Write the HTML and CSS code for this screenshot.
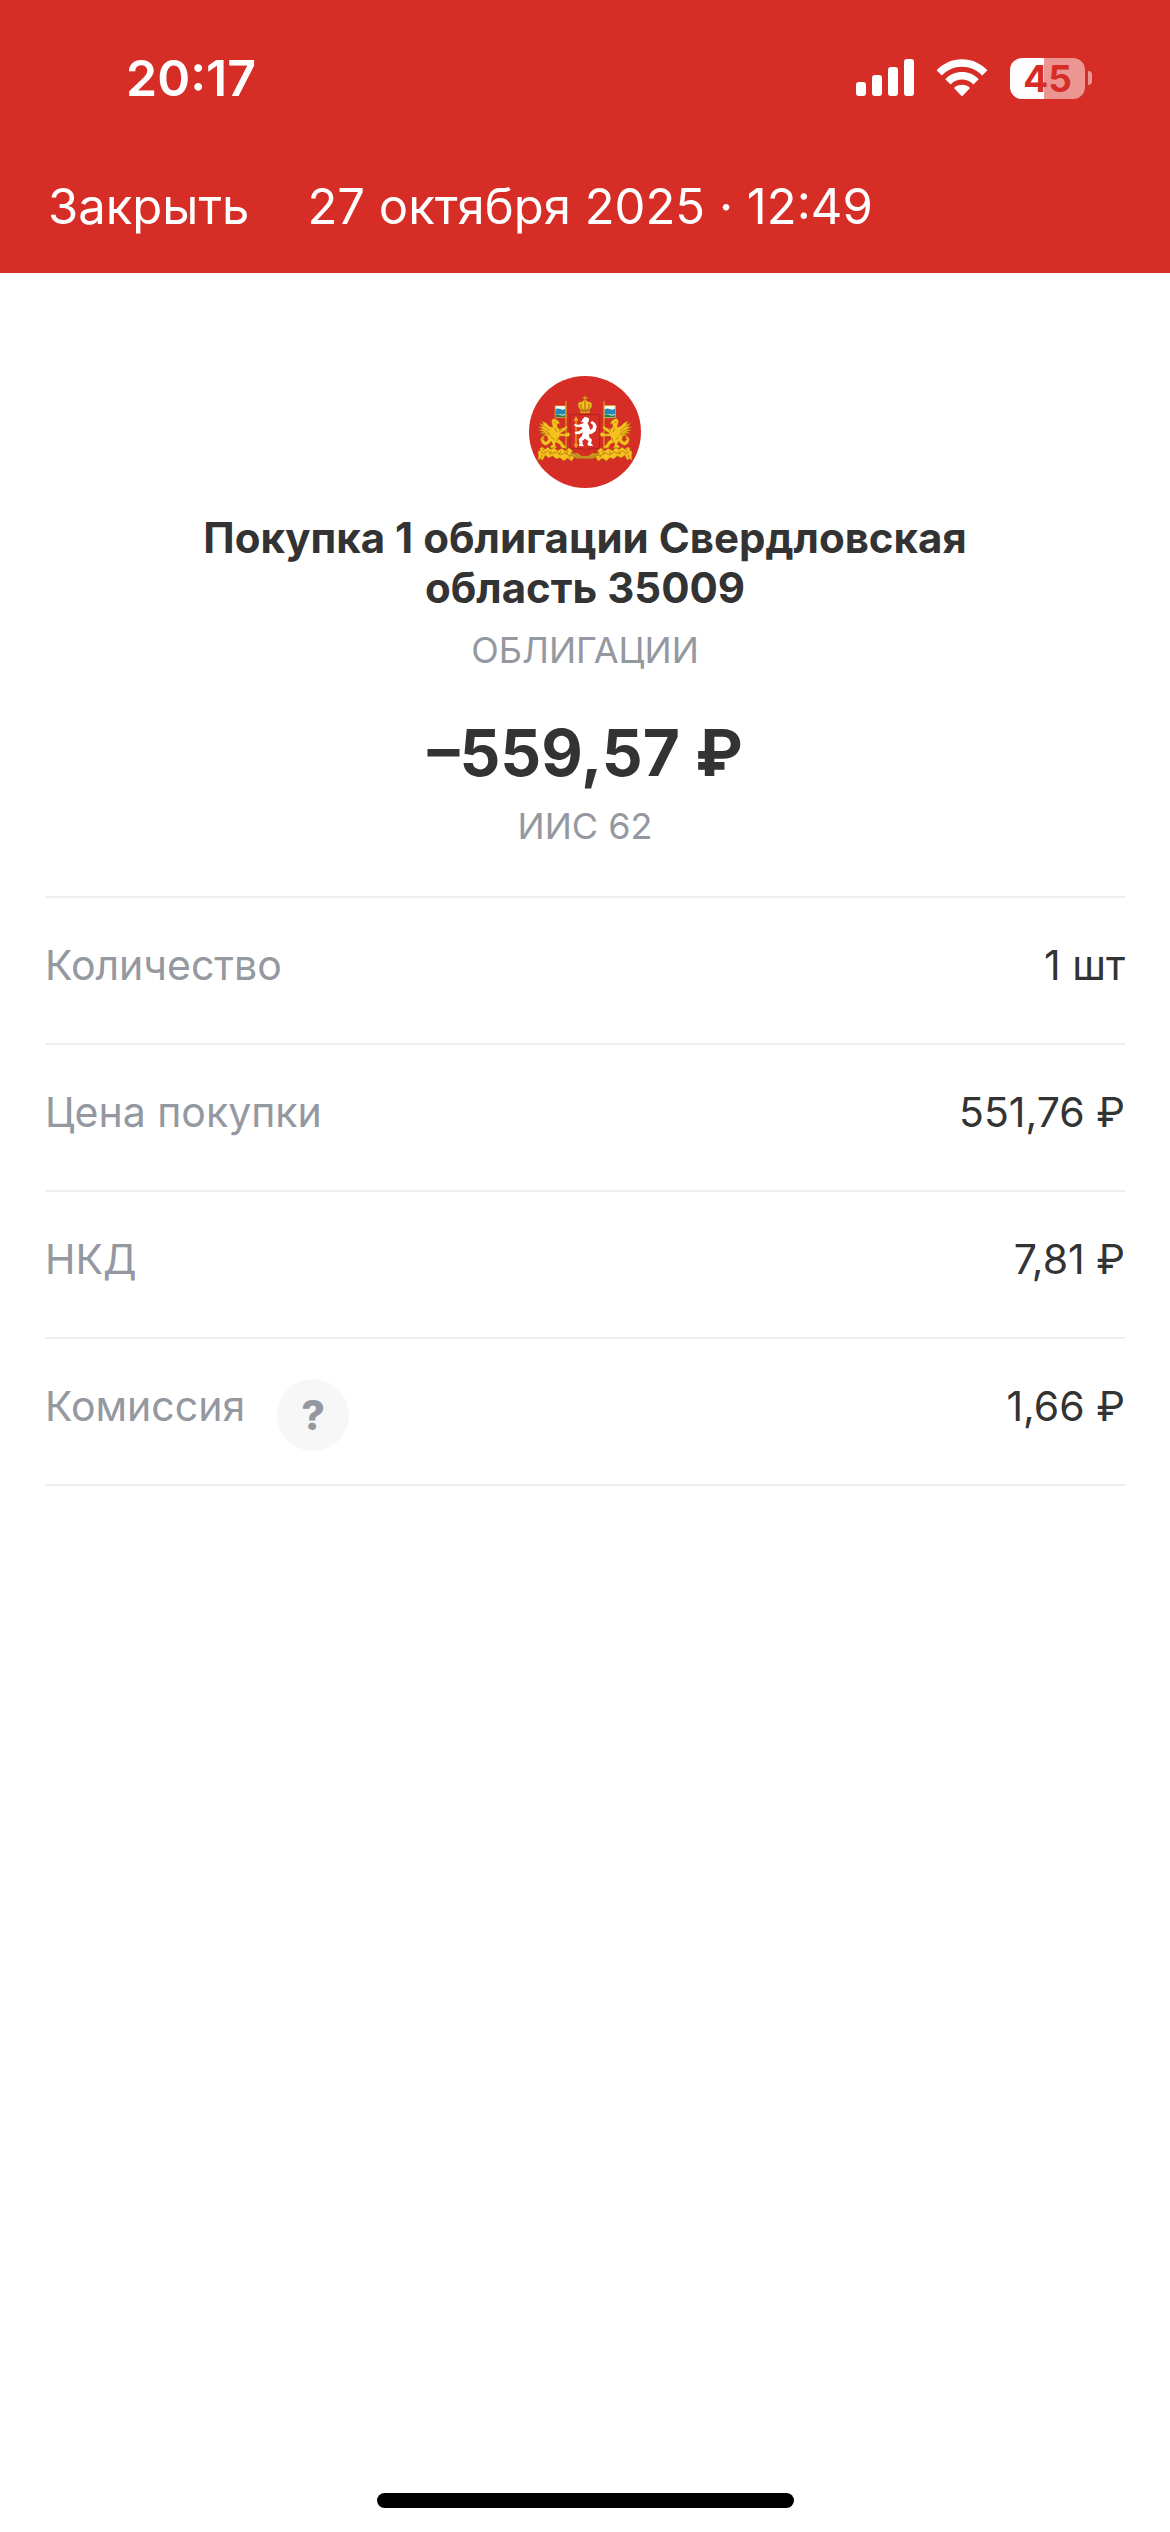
FILE: index.html
```html
<!DOCTYPE html>
<html lang="ru">
<head>
<meta charset="utf-8">
<meta name="viewport" content="width=device-width, initial-scale=1">
<title>Покупка облигации</title>
<link rel="stylesheet" href="styles.css">
</head>
<body>
<div class="page">
  <header class="header">
    <div class="status">
      <time class="status-time">20:17</time>
      <div class="status-icons">
        <svg class="signal" viewBox="0 0 58 38" aria-hidden="true">
          <rect x="0" y="23" width="10" height="14" rx="3"/>
          <rect x="16" y="16" width="10" height="21" rx="3"/>
          <rect x="32" y="8" width="10" height="29" rx="3"/>
          <rect x="48" y="0" width="10" height="37" rx="3"/>
        </svg>
        <svg class="wifi" viewBox="0 0 52 38" aria-hidden="true">
          <path d="M.6 11.2C7.500 4.200 16.500.300 26 .300S44.500 4.200 51.400 11.200L46.200 16.400C40.800 10.900 33.700 7.800 26 7.800S11.200 10.900 5.800 16.400Z"/>
          <path d="M9.300 20.200C13.800 15.600 19.700 13.100 26 13.100S38.200 15.600 42.700 20.200L37.400 25.500C34.300 22.300 30.300 20.600 26 20.600S17.700 22.300 14.600 25.500Z"/>
          <path d="M18 29C20.200 26.900 23 25.800 26 25.800S31.800 26.900 34 29L27 36.500Q26 37.500 25 36.500Z"/>
        </svg>
        <div class="battery"><span class="battery-body">45</span><span class="battery-cap"></span></div>
      </div>
    </div>
    <nav class="nav">
      <button class="close" type="button">Закрыть</button>
      <span class="date">27 октября 2025 · 12:49</span>
    </nav>
  </header>

  <main class="content">
    <section class="summary">
      <svg class="emblem" viewBox="27 33 336 336" role="img" aria-label="Герб Свердловской области">
        <defs>
          <g id="supporter">
            <!-- flag and its pole -->
            <path d="M138 108V252" stroke="#d99a1c" stroke-width="4" fill="none"/>
            <path d="M106 123H136V157H106Z" fill="#fff"/>
            <path d="M106 133Q114 128 121 132T136 131V147Q128 151 121 148T106 149Z" fill="#2389b4"/>
            <path d="M106 149Q114 146 121 150T136 149V156H106Z" fill="#22804d"/>
            <path d="M105 122H137V158H105Z" stroke="#d99a1c" stroke-width="2" fill="none"/>
            <!-- griffin -->
            <path d="M94 168L100 160L108 163L116 168L120 178L113 176L111 184L118 193L133 187L139 182L143 187L136 196L121 205L132 207L145 201L151 208L145 216L132 214L119 213L116 222L126 230L132 240L140 244L139 250L125 249L119 238L107 232L106 241L111 249H92L90 243L98 239L94 229L87 236L77 242L66 236L61 224L67 213L74 216L71 224L77 231L84 224L81 213L66 211L76 207L59 204L71 200L55 195L68 193L55 185L68 185L57 175L71 178L64 168L78 173L88 184L98 187Z" fill="#f6c21f" stroke="#a8650e" stroke-width="1.500"/>
            <path d="M66 179L90 198M63 189L90 206M70 202L91 211M101 171L107 173M105 189L111 201M93 215L103 224M114 218L111 229M126 193L117 199M71 218L67 226" stroke="#a8650e" stroke-width="2" fill="none"/>
            <!-- oak branch -->
            <path d="M55 270Q50 259 61 255Q56 247 68 246L75 253L84 246L91 253L103 248L112 257L126 250L136 258L147 248L158 257L154 266L171 264L184 272L174 281L163 277L155 289L143 280L131 288L120 278L109 282L98 273L86 279L76 271L68 286L61 281L54 286Z" fill="#f6c21f" stroke="#a8650e" stroke-width="1.500"/>
            <path d="M62 259L72 266L83 257L95 266L108 261L121 270L135 263L147 271L163 270M68 251L73 259M94 258L89 269M122 258L118 268M143 256L139 269M151 279L147 271M64 278L66 269" stroke="#a8650e" stroke-width="2" fill="none"/>
          </g>
        </defs>
        <circle cx="195" cy="201" r="168" fill="#d62e26"/>
        <path d="M150 149H239V244Q239 251 230 251H205L195 256L185 251H159Q150 251 150 244Z" fill="#d62e26" stroke="#9d2019" stroke-width="2"/>
        <use href="#supporter"/>
        <use href="#supporter" transform="matrix(-1 0 0 1 390 0)"/>
        <!-- the flag on the right flies away from its pole, to the right -->
        <path d="M253 122H286V158H253Z" fill="#fff" stroke="#d99a1c" stroke-width="2"/>
        <path d="M254 133Q262 128 269 132T285 131V147Q277 151 269 148T254 149Z" fill="#2389b4"/>
        <path d="M254 149Q262 146 269 150T285 149V157H254Z" fill="#22804d"/>
        <!-- crown -->
        <path d="M193 92H197V97H202V101H197V106Q202 107 205 111Q214 109 216 117Q217 126 210 133L209 144H181L180 133Q173 126 174 117Q176 109 185 111Q188 107 193 106V101H188V97H193Z" fill="#f4bd20" stroke="#a8650e" stroke-width="1.500"/>
        <path d="M180 135H210M183 117Q180 126 186 132M207 117Q210 126 204 132M195 109V132" stroke="#a8650e" stroke-width="3" fill="none"/>
        <path d="M184 138H206" stroke="#b8322a" stroke-width="3"/>
        <!-- arrow and sable -->
        <path d="M168 160V239M163 167L168 158L173 167M163 237L168 246L173 237" stroke="#eead1d" stroke-width="4" fill="none"/>
        <path d="M187 164L194 155L200 157L207 160L206 170L202 174L207 183L211 195L218 190L219 181L211 173L216 168L225 174L230 184L227 198L216 206L207 208L208 217L216 224L213 235L220 242L207 243L202 238L206 228L195 221L187 227L188 238L192 244L176 243L179 236L176 223L186 213L188 202L178 208L166 207L164 202L177 198L187 191L184 185L175 187L163 182V177L175 179L187 176L192 171L183 172Z" fill="#fff"/>
        <!-- motto ribbon -->
        <path d="M153 263Q170 265 180 273H211Q222 264 238 263L232 272Q220 276 212 281H180Q168 274 156 273Z" fill="#d9a426" stroke="#98600d" stroke-width="1.500"/>
        <path d="M162 268L180 277H211L229 268" fill="none" stroke="#7a6b35" stroke-width="2" stroke-dasharray="4 2"/>
      </svg>
      <h1 class="title">Покупка 1 облигации Свердловская область 35009</h1>
      <p class="caption">ОБЛИГАЦИИ</p>
      <p class="amount">–559,57 ₽</p>
      <p class="caption">ИИС 62</p>
    </section>

    <dl class="details">
      <div class="row"><dt>Количество</dt><dd>1 шт</dd></div>
      <div class="row"><dt>Цена покупки</dt><dd>551,76 ₽</dd></div>
      <div class="row"><dt>НКД</dt><dd>7,81 ₽</dd></div>
      <div class="row"><dt>Комиссия <button class="help" type="button" aria-label="О комиссии">?</button></dt><dd>1,66 ₽</dd></div>
    </dl>
  </main>
  <div class="home-indicator"></div>
</div>
</body>
</html>
```
FILE: styles.css
```css
* {
  box-sizing: border-box;
}

body {
  margin: 0;
  background: #fff;
  color: #333;
  font-family: Inter, "Liberation Sans", sans-serif;
}

h1, p, dl, dd {
  margin: 0;
}

button {
  padding: 0;
  border: 0;
  font-family: inherit;
}

.page {
  display: flex;
  flex-direction: column;
  min-height: 100vh;
  padding-bottom: 24px;
}

.header {
  background: #d62e26;
  color: #fff;
  padding: 48px 48px 36px;
}

.status {
  display: flex;
  align-items: center;
  justify-content: space-between;
  height: 60px;
  padding: 0 30px 0 78px;
}

.status-time {
  font-size: 50px;
  font-weight: 600;
  line-height: 60px;
}

.status-icons {
  display: flex;
  align-items: center;
  gap: 22px;
}

.signal {
  width: 58px;
  height: 38px;
  fill: #fff;
}

.wifi {
  width: 52px;
  height: 38px;
  fill: #fff;
}

.battery {
  display: flex;
  align-items: center;
  gap: 3px;
}

.battery-body {
  width: 75px;
  height: 41px;
  border-radius: 12px;
  background: linear-gradient(90deg, #fff 34px, #eb9692 34px);
  color: #d62e26;
  font-size: 37px;
  font-weight: 700;
  line-height: 41px;
  text-align: center;
}

.battery-cap {
  width: 4px;
  height: 14px;
  border-radius: 0 4px 4px 0;
  background: #eb9692;
}

.nav {
  display: flex;
  align-items: center;
  gap: 58px;
  margin-top: 69px;
  font-size: 49px;
  line-height: 60px;
}

.close {
  background: none;
  color: inherit;
  font-size: 49px;
  line-height: 60px;
}

.content {
  padding: 103px 45px 0;
}

.summary {
  display: flex;
  flex-direction: column;
  align-items: center;
  padding-bottom: 47px;
  text-align: center;
}

.emblem {
  width: 112px;
  height: 112px;
}

.title {
  max-width: 820px;
  margin-top: 25px;
  font-size: 42px;
  font-weight: 700;
  line-height: 50px;
}

.caption {
  margin-top: 14px;
  color: #9498a0;
  font-size: 36px;
  line-height: 46px;
}

.amount {
  margin-top: 40px;
  font-size: 64px;
  font-weight: 700;
  line-height: 80px;
}

.amount + .caption {
  margin-top: 10px;
}

.details {
  border-top: 2px solid #eee;
}

.row {
  display: flex;
  align-items: flex-start;
  justify-content: space-between;
  height: 147px;
  padding-top: 40px;
  border-bottom: 2px solid #eee;
  font-size: 41px;
  line-height: 54px;
}

.row dt {
  display: flex;
  gap: 32px;
  color: #9498a0;
}

.help {
  width: 72px;
  height: 72px;
  border-radius: 50%;
  background: #f7f7f8;
  color: #9498a0;
  font-size: 41px;
  font-weight: 800;
  line-height: 72px;
}

.home-indicator {
  width: 417px;
  height: 15px;
  margin: auto auto 0;
  border-radius: 8px;
  background: #000;
}
```
